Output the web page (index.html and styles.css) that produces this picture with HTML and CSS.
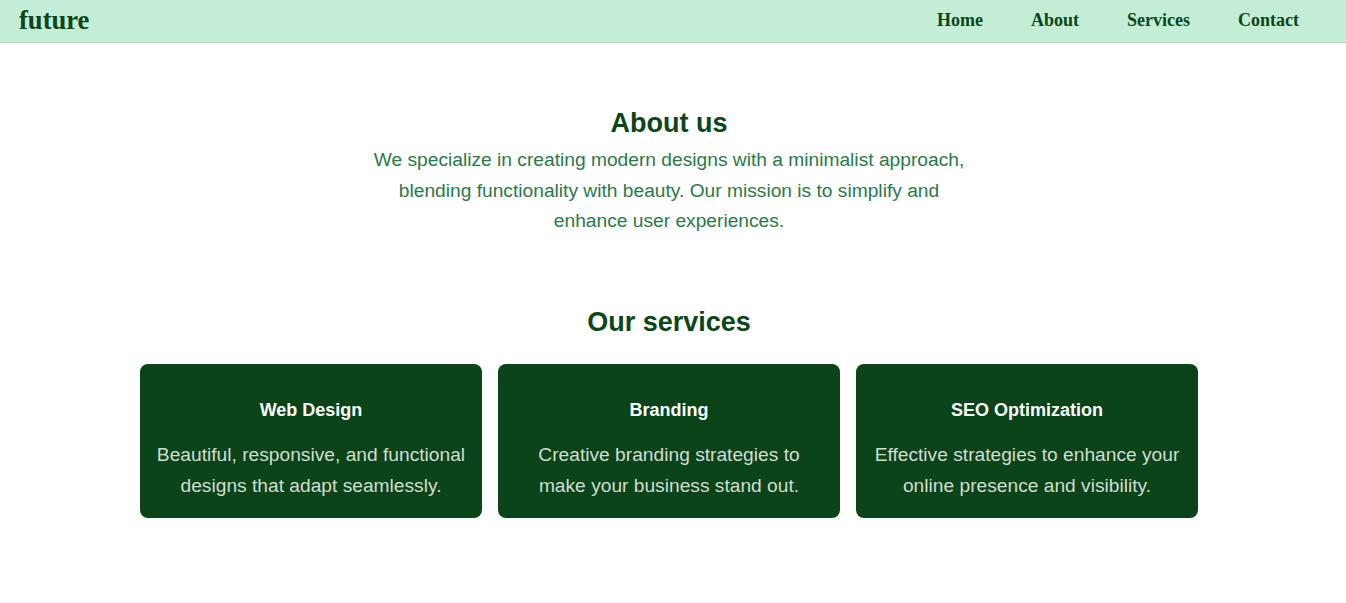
FILE: index.html
```html
<!DOCTYPE html>
<html lang="en">
<head>
<meta charset="utf-8">
<title>future</title>
<link rel="stylesheet" href="styles.css">
</head>
<body>
<header class="topbar">
  <div class="logo">future</div>
  <nav class="nav">
    <a href="#">Home</a>
    <a href="#">About</a>
    <a href="#">Services</a>
    <a href="#">Contact</a>
  </nav>
</header>
<main class="content">
  <section class="about">
    <h2 class="section-title">About us</h2>
    <p class="about-text">We specialize in creating modern designs with a minimalist approach, blending functionality with beauty. Our mission is to simplify and enhance user experiences.</p>
  </section>
  <section class="services">
    <h2 class="section-title">Our services</h2>
    <div class="cards">
      <div class="card">
        <h3>Web Design</h3>
        <p>Beautiful, responsive, and functional designs that adapt seamlessly.</p>
      </div>
      <div class="card">
        <h3>Branding</h3>
        <p>Creative branding strategies to make your business stand out.</p>
      </div>
      <div class="card">
        <h3>SEO Optimization</h3>
        <p>Effective strategies to enhance your online presence and visibility.</p>
      </div>
    </div>
  </section>
</main>
</body>
</html>
```
FILE: styles.css
```css
* { box-sizing: border-box; }
body {
  margin: 0;
  font-family: "Liberation Sans", Arial, sans-serif;
  background: #ffffff;
}
.topbar {
  height: 43px;
  background: #c3eed5;
  border-bottom: 1px solid #b4dcc4;
  display: flex;
  align-items: center;
  justify-content: space-between;
  padding: 0 47px 1px 19px;
}
.logo {
  font-family: "Liberation Serif", "Times New Roman", serif;
  font-weight: bold;
  font-size: 26.6px;
  color: #0b4619;
}
.nav {
  display: flex;
  gap: 48px;
}
.nav a {
  font-family: "Liberation Serif", "Times New Roman", serif;
  font-weight: bold;
  font-size: 18px;
  color: #0b4619;
  text-decoration: none;
}
.content {
  padding-right: 8px;
}
.about {
  text-align: center;
  padding-top: 64px;
}
.section-title {
  margin: 0;
  font-size: 27px;
  line-height: 32px;
  color: #0b4619;
  font-weight: bold;
}
.about-text {
  max-width: 600px;
  margin: 6px auto 0;
  font-size: 19.2px;
  line-height: 1.6;
  color: #2a7a48;
}
.services {
  text-align: center;
  padding-top: 69px;
}
.cards {
  display: flex;
  justify-content: center;
  gap: 16px;
  margin-top: 26px;
}
.card {
  width: 342px;
  background: #0a4418;
  border-radius: 8px;
  padding: 36px 16px 16px;
}
.card h3 {
  margin: 0;
  font-size: 18px;
  line-height: 21px;
  color: #ffffff;
}
.card p {
  margin: 19px 0 0;
  font-size: 19.2px;
  line-height: 1.6;
  color: #d3dcd3;
}
```
